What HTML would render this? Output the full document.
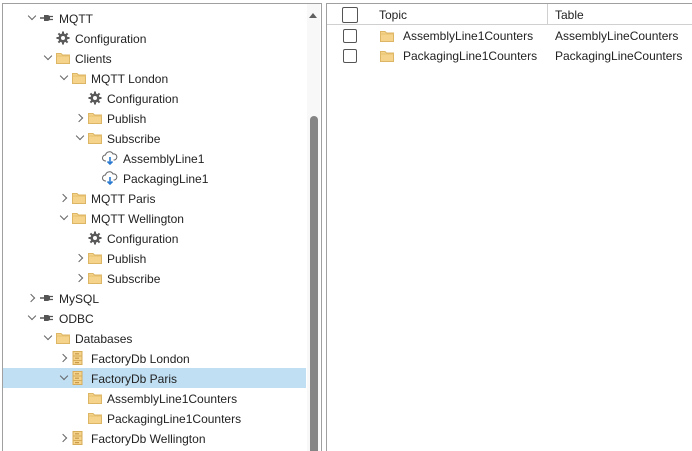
<!DOCTYPE html>
<html style="overflow:hidden;height:451px"><head><style>
body{margin:0;width:692px;height:451px;background:#fff;font-family:"Liberation Sans",sans-serif;font-size:12px;color:#222;overflow:hidden;position:relative}
.lp{position:absolute;left:2px;top:3px;width:318px;height:460px;border:1px solid #a0a0a0;border-bottom:none;overflow:hidden}
.rp{position:absolute;left:326px;top:3px;width:380px;height:460px;border-left:1px solid #a0a0a0;border-top:1px solid #a0a0a0}
.row{position:absolute;left:0;width:303px;height:20px;line-height:20px;white-space:nowrap}
.sel{background:#c0dff3}
.ch{position:absolute;top:6px;width:5px;height:5px;border-right:1px solid #666;border-bottom:1px solid #666}
.ch.d{transform:rotate(45deg);top:5px}
.ch.r{transform:rotate(-45deg);top:7px}
.ic{position:absolute;top:3px}
.tx{position:absolute;top:1px}
.sb{position:absolute;left:304px;top:0;width:13px;height:460px;background:#f8f8f8}
.th{position:absolute;left:307px;top:112px;width:8px;height:350px;background:#858585;border-radius:4px 4px 0 0}
.up{position:absolute;left:306px;top:9px;width:0;height:0;border-left:4px solid transparent;border-right:4px solid transparent;border-bottom:5px solid #606060}
.cb{position:absolute;width:12px;height:12px;border:1px solid #555;border-radius:2px;background:#fff}
</style></head><body>
<svg width="0" height="0" style="position:absolute">
<defs>
<symbol id="fold" viewBox="0 0 14 12"><path d="M0.5 1.5h4.5l1.5 1.5h7v8.5h-13z" fill="#f5d38a" stroke="#dcb565" stroke-width="1"/><path d="M0.5 4h13" stroke="#e8c070"/></symbol>
<symbol id="gear" viewBox="0 0 14 14"><g fill="#5a5a5a"><circle cx="7" cy="7" r="4.6"/><rect x="6" y="0.5" width="2" height="13"/><rect x="0.5" y="6" width="13" height="2"/><rect x="6" y="0.5" width="2" height="13" transform="rotate(45 7 7)"/><rect x="6" y="0.5" width="2" height="13" transform="rotate(-45 7 7)"/></g><circle cx="7" cy="7" r="2" fill="#fff"/></symbol>
<symbol id="plug" viewBox="0 0 14 12"><path d="M0 6h4" stroke="#555" stroke-width="1.5"/><path d="M4 3h4l2 1v4l-2 1h-4z" fill="#555"/><path d="M10 4.5h3M10 7.5h3" stroke="#555" stroke-width="1.3"/></symbol>
<symbol id="db" viewBox="0 0 12 14"><rect x="1" y="0.5" width="9" height="13" fill="#f5d38a" stroke="#d8ad5a"/><path d="M1 5h9M1 9.5h9" stroke="#d8ad5a"/><rect x="3" y="2.2" width="4" height="1.2" fill="#c89a4a"/><rect x="3" y="6.6" width="4" height="1.2" fill="#c89a4a"/><rect x="3" y="11" width="4" height="1.2" fill="#c89a4a"/></symbol>
<symbol id="cloud" viewBox="0 0 16 14"><path d="M4 10h-0.5a3 3 0 0 1 0-6 4 4 0 0 1 7.5-1 3 3 0 0 1 1.5 6h-1" fill="none" stroke="#666" stroke-width="1"/><path d="M8 6v7M5.5 10.5l2.5 2.5 2.5-2.5" stroke="#2a7ad0" stroke-width="1.6" fill="none"/></symbol>
</defs></svg>
<div class="lp">
<div class="sb"></div><div class="up"></div><div class="th"></div>
</div>
<div id="tree" style="position:absolute;left:3px;top:0;width:303px;height:451px;overflow:hidden"></div>
<div class="rp">
<div style="position:absolute;left:0;top:0;width:380px;height:20px;border-bottom:1px solid #d0d0d0"></div>
<div style="position:absolute;left:220px;top:0;width:1px;height:21px;background:#d0d0d0"></div>
<div class="cb" style="left:15px;top:3px;width:14px;height:14px"></div>
<div style="position:absolute;left:52px;top:4px">Topic</div>
<div style="position:absolute;left:228px;top:4px">Table</div>
<div class="cb" style="left:16px;top:25px"></div>
<svg style="position:absolute;left:53px;top:26px" width="14" height="12"><use href="#fold"/></svg>
<div style="position:absolute;left:76px;top:25px">AssemblyLine1Counters</div>
<div style="position:absolute;left:228px;top:25px">AssemblyLineCounters</div>
<div class="cb" style="left:16px;top:45px"></div>
<svg style="position:absolute;left:53px;top:46px" width="14" height="12"><use href="#fold"/></svg>
<div style="position:absolute;left:76px;top:45px">PackagingLine1Counters</div>
<div style="position:absolute;left:228px;top:45px">PackagingLineCounters</div>
</div>
<script>
var rows=[[0,'d','plug','MQTT'],[1,'','gear','Configuration'],[1,'d','fold','Clients'],[2,'d','fold','MQTT London'],[3,'','gear','Configuration'],[3,'r','fold','Publish'],[3,'d','fold','Subscribe'],[4,'','cloud','AssemblyLine1'],[4,'','cloud','PackagingLine1'],[2,'r','fold','MQTT Paris'],[2,'d','fold','MQTT Wellington'],[3,'','gear','Configuration'],[3,'r','fold','Publish'],[3,'r','fold','Subscribe'],[0,'r','plug','MySQL'],[0,'d','plug','ODBC'],[1,'d','fold','Databases'],[2,'r','db','FactoryDb London'],[2,'d','db','FactoryDb Paris'],[3,'','fold','AssemblyLine1Counters'],[3,'','fold','PackagingLine1Counters'],[2,'r','db','FactoryDb Wellington']];
var h='';rows.forEach(function(r,i){var n=r[0],y=8+20*i;var sel=r[3]=='FactoryDb Paris';
h+='<div class="row'+(sel?' sel':'')+'" style="top:'+y+'px">';
if(r[1])h+='<div class="ch '+r[1]+'" style="left:'+(25+16*n+(r[1]=='d'?1:0))+'px"></div>';
var ix=37+16*n,w=14,hh=12,t=4;if(r[2]=='gear'){hh=14;t=3}if(r[2]=='db'){w=12;hh=14;t=3}if(r[2]=='cloud'){w=16;hh=14;t=3;ix-=2}
h+='<svg class="ic" style="left:'+ix+'px;top:'+t+'px" width="'+w+'" height="'+hh+'"><use href="#'+r[2]+'"/></svg>';
h+='<span class="tx" style="left:'+(56+16*n)+'px">'+r[3]+'</span></div>';});
document.getElementById('tree').innerHTML=h;
</script>
</body></html>
